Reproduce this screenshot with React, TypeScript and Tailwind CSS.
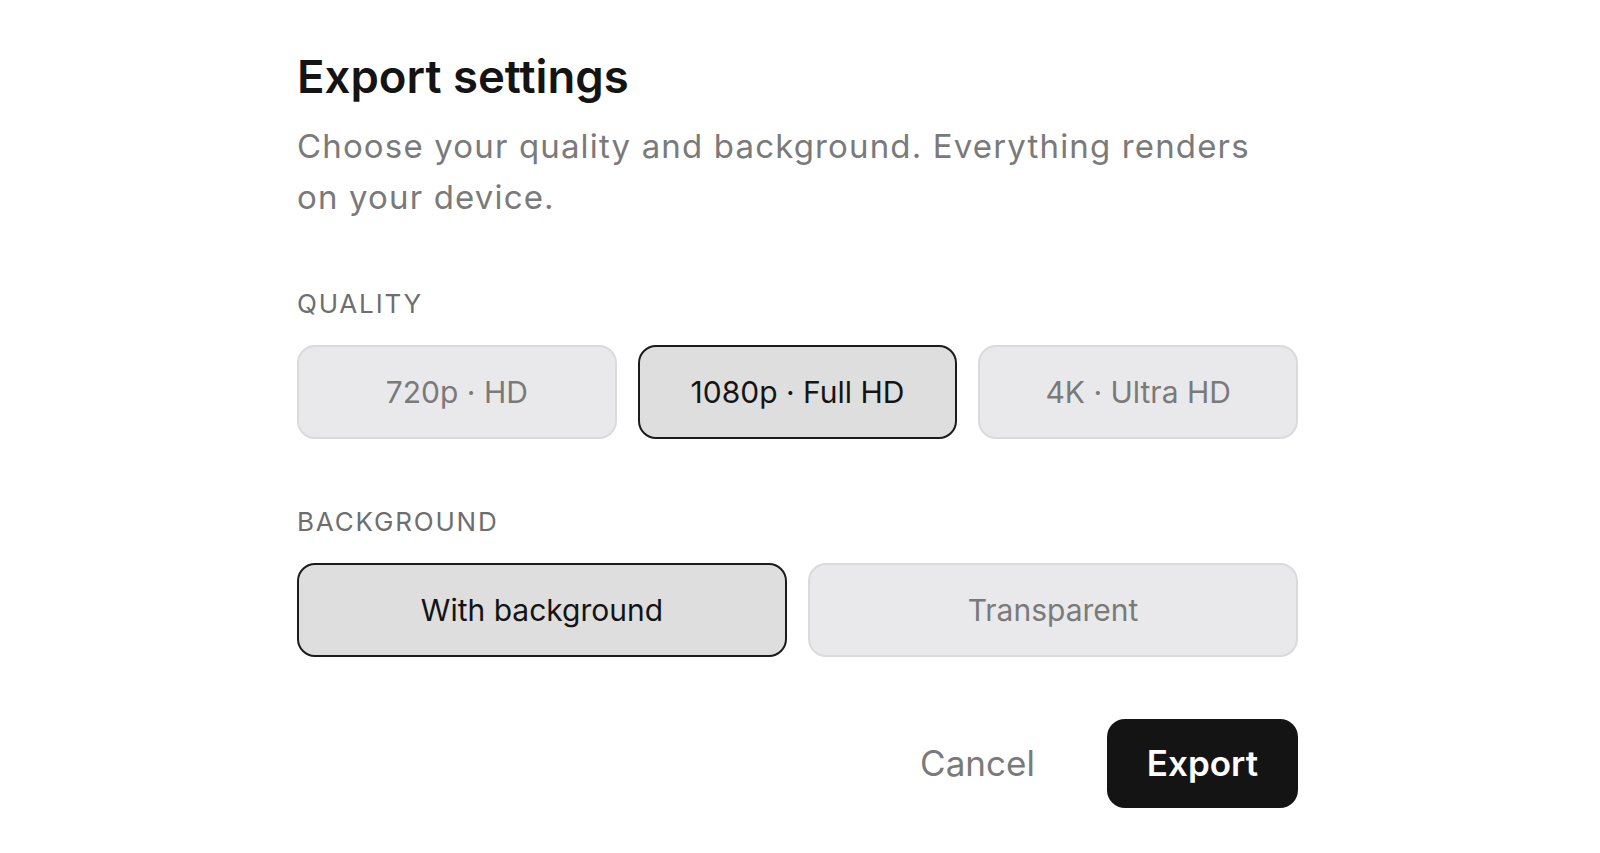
import { useState } from 'react';

type Option = { id: string; label: string };

const qualities: Option[] = [
  { id: '720', label: '720p · HD' },
  { id: '1080', label: '1080p · Full HD' },
  { id: '4k', label: '4K · Ultra HD' },
];

const backgrounds: Option[] = [
  { id: 'bg', label: 'With background' },
  { id: 'transparent', label: 'Transparent' },
];

function OptionButton({ label, selected, onClick }: { label: string; selected: boolean; onClick: () => void }) {
  return (
    <button
      onClick={onClick}
      className={`h-[94px] rounded-[18px] border-2 text-[30px] ${
        selected
          ? 'border-[#1c1c1c] bg-[#dedede] text-[#141414]'
          : 'border-[#dadadc] bg-[#e9e9eb] text-[#7a7a7a]'
      }`}
    >
      {label}
    </button>
  );
}

export default function App() {
  const [quality, setQuality] = useState('1080');
  const [background, setBackground] = useState('bg');

  return (
    <div className="min-h-[853px] bg-white font-['Inter','Noto_Sans',sans-serif]">
      <div className="ml-[297px] w-[1001px] pt-[51px]">
        <h1 className="text-[45.5px] leading-[52px] font-semibold text-[#141414]">Export settings</h1>
        <p className="mt-[18px] max-w-[980px] text-[33px] leading-[51px] tracking-[0.035em] text-[#7a7a7a]">
          Choose your quality and background. Everything renders on your device.
        </p>

        {/* Quality */}
        <div className="mt-[65px] text-[26px] leading-[32px] tracking-[0.07em] text-[#6e6e6e]">QUALITY</div>
        <div className="mt-[25px] grid grid-cols-3 gap-[21px]">
          {qualities.map((q) => (
            <OptionButton key={q.id} label={q.label} selected={quality === q.id} onClick={() => setQuality(q.id)} />
          ))}
        </div>

        {/* Background */}
        <div className="mt-[67px] text-[26px] leading-[32px] tracking-[0.07em] text-[#6e6e6e]">BACKGROUND</div>
        <div className="mt-[25px] grid grid-cols-2 gap-[21px]">
          {backgrounds.map((b) => (
            <OptionButton key={b.id} label={b.label} selected={background === b.id} onClick={() => setBackground(b.id)} />
          ))}
        </div>

        {/* Actions */}
        <div className="mt-[62px] flex items-center justify-end gap-9">
          <button className="px-9 text-[35px] text-[#7a7a7a]">Cancel</button>
          <button className="h-[89px] rounded-[18px] bg-[#141414] px-10 text-[35px] font-semibold text-white">
            Export
          </button>
        </div>
      </div>
    </div>
  );
}
